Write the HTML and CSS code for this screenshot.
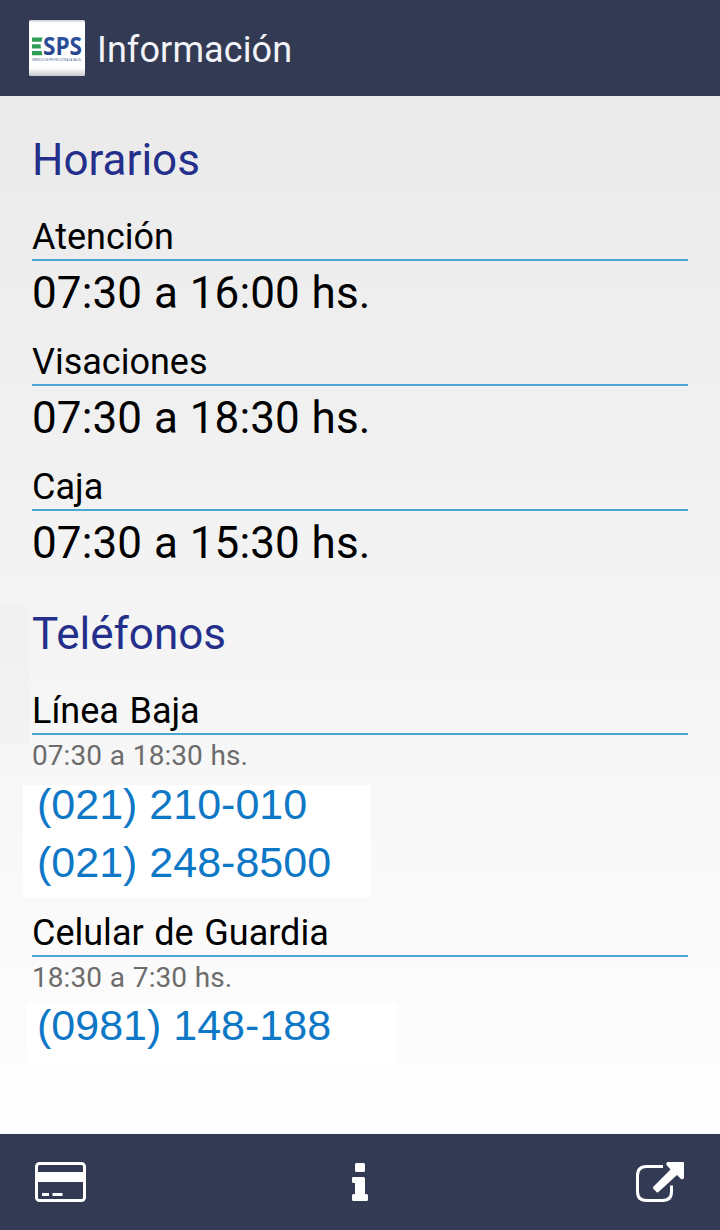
FILE: index.html
```
<!DOCTYPE html>
<html lang="es">
  <head>
    <meta charset="UTF-8" />
    <meta name="viewport" content="width=device-width, initial-scale=1.0" />
    <title>Información</title>
    <link rel="stylesheet" href="styles.css">
  </head>
  <body>
    <header class="header">
      <svg class="logo" viewBox="0 0 56 56">
        <defs>
          <linearGradient id="shade" x1="0" y1="0" x2="0" y2="1">
            <stop offset="0" stop-color="#c9c9cd" />
            <stop offset="0.05" stop-color="#fff" />
            <stop offset="0.86" stop-color="#fff" />
            <stop offset="1" stop-color="#c6c8cc" />
          </linearGradient>
          <linearGradient id="letters" x1="0" y1="0" x2="0" y2="1">
            <stop offset="0" stop-color="#2d5ba8" />
            <stop offset="1" stop-color="#263c82" />
          </linearGradient>
        </defs>
        <rect width="56" height="56" rx="1.5" fill="url(#shade)" />
        <path d="M3 17.500h10.500l-1 4.200H3zM3 24.200h8.500l.5 4.400H3zM3 31h9.500l1 4.200H3z" fill="#2f9e55" />
        <text class="logo-text" x="14" y="35.200" textLength="39" lengthAdjust="spacingAndGlyphs" fill="url(#letters)">SPS</text>
        <text class="logo-sub" x="3" y="40.500" textLength="49">SERVICIO DE PROTECCIÓN A LA SALUD</text>
      </svg>
      <h1 class="title">Información</h1>
    </header>

    <main class="content">
      <section class="section">
        <h2 class="heading">Horarios</h2>
        <div class="item">
          <h3 class="label">Atención</h3>
          <p class="time">07:30 a 16:00 hs.</p>
        </div>
        <div class="item">
          <h3 class="label">Visaciones</h3>
          <p class="time">07:30 a 18:30 hs.</p>
        </div>
        <div class="item">
          <h3 class="label">Caja</h3>
          <p class="time">07:30 a 15:30 hs.</p>
        </div>
      </section>

      <section class="section">
        <h2 class="heading">Teléfonos</h2>
        <div class="item">
          <h3 class="label">Línea Baja</h3>
          <p class="hours">07:30 a 18:30 hs.</p>
          <div class="phones">
            <a class="phone">(021) 210-010</a>
            <a class="phone">(021) 248-8500</a>
          </div>
        </div>
        <div class="item">
          <h3 class="label">Celular de Guardia</h3>
          <p class="hours">18:30 a 7:30 hs.</p>
          <div class="phones mobile">
            <a class="phone">(0981) 148-188</a>
          </div>
        </div>
      </section>
    </main>

    <nav class="tabs">
      <!-- card -->
      <svg class="icon" width="52" height="42" viewBox="0 0 52 42">
        <rect x="1.500" y="2.500" width="48" height="37" rx="3" fill="none" stroke="#fff" stroke-width="3" />
        <path d="M1 11h49v10H1zM7 32h7v3H7zM17.500 32h10v3h-10z" fill="#fff" />
      </svg>
      <!-- info -->
      <svg class="icon" width="22" height="40" viewBox="0 0 22 40">
        <rect x="4" y="1" width="10" height="9" rx="1.500" fill="#fff" />
        <path d="M2 15h10.500q1.500 0 1.500 1.500V32h1.500q1.500 0 1.500 1.500v4q0 1.500-1.500 1.500h-13Q1 39 1 37.500v-4Q1 32 2.500 32H4V21H2.500Q1 21 1 19.500V16q0-1 1-1z" fill="#fff" />
      </svg>
      <!-- external link -->
      <svg class="icon" width="48" height="44" viewBox="0 0 48 44">
        <path d="M27 6.500H10.500Q1.500 6.500 1.500 15.500V31.500Q1.500 40.500 10.500 40.500H26.500Q35.500 40.500 35.500 31.500V25.500" fill="none" stroke="#fff" stroke-width="3" />
        <path d="M31.500 2H47q1 0 1 1V18q-1 2-3 1l-4-4L22.500 32q-1 1-2 0L17.300 28.800q-1-1 0-2L34.500 9.500 30.500 5q-1-2 1-3z" fill="#fff" />
      </svg>
    </nav>
  </body>
</html>
```
FILE: styles.css
```
* {
  box-sizing: border-box;
}
body {
  margin: 0;
  height: 1230px;
  display: flex;
  flex-direction: column;
  font-family: Roboto, sans-serif;
  color: #000;
}
h1,
h2,
h3,
p {
  margin: 0;
  font-weight: 400;
}
.header {
  height: 96px;
  padding: 0 29px;
  display: flex;
  align-items: center;
  gap: 12px;
  background: #333a54;
}
.logo {
  width: 56px;
  height: 56px;
}
.logo-text {
  font: bold 25px "Open Sans", sans-serif;
}
.logo-sub {
  font: 2.6px "Liberation Sans", sans-serif;
  fill: #4b5d96;
}
.title {
  padding-top: 4px;
  font-size: 36px;
  line-height: 42px;
  letter-spacing: 0.1px;
  color: #f3f3fa;
}
.content {
  flex: 1;
  padding: 38px 32px 0;
  background:
    linear-gradient(#f1f1f1, #f2f2f2) 0 510px / 29px 138px no-repeat,
    linear-gradient(#eaeaea, #fefefe);
}
.section + .section {
  margin-top: 39px;
}
.heading {
  margin-bottom: 30px;
  font-size: 44px;
  line-height: 52px;
  color: #232f8b;
}
.item + .item {
  margin-top: 22px;
}
.label {
  padding-bottom: 1px;
  font-size: 36px;
  line-height: 42px;
  word-spacing: 1.7px;
  border-bottom: 2px solid #4ba6d3;
}
.time {
  margin-top: 6px;
  font-size: 44px;
  line-height: 52px;
  letter-spacing: 0.1px;
  word-spacing: 0.8px;
}
.hours {
  margin-top: 4px;
  font-size: 28px;
  line-height: 34px;
  letter-spacing: 0.05px;
  word-spacing: 0.8px;
  color: #6c6c6c;
}
.phones {
  width: 348px;
  height: 112px;
  margin: 12px 0 0 -9px;
  padding-left: 14px;
  display: flex;
  flex-direction: column;
  gap: 20px;
  background: #fff;
}
.phones.mobile {
  width: 371px;
  height: 62px;
  margin: 8px 0 0 -6px;
  padding: 3px 0 0 11px;
}
.item:has(.phones) + .item {
  margin-top: 15px;
}
.phone {
  font-family: "Liberation Sans", Arial, sans-serif;
  font-size: 43px;
  line-height: 38px;
  color: #0e78c6;
}
.tabs {
  height: 96px;
  padding: 0 36px 0 35px;
  display: flex;
  align-items: center;
  justify-content: space-between;
  background: #333a54;
}
```
